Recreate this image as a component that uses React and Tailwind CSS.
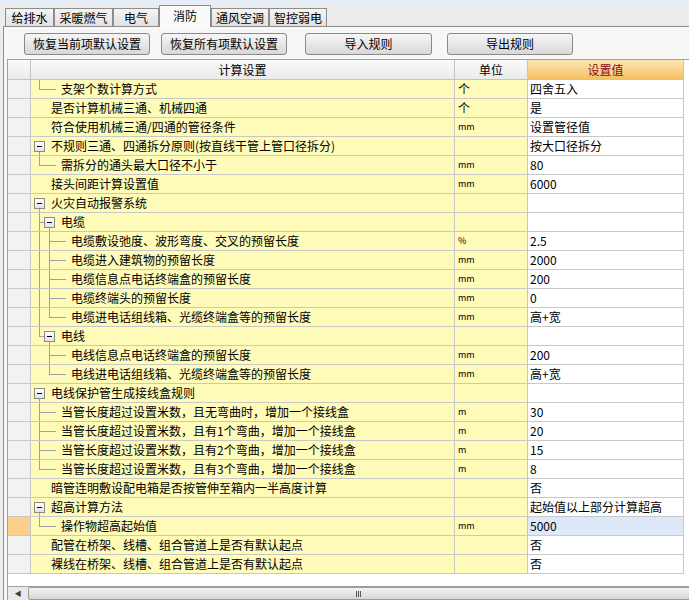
import React from 'react';

const tabs = ['给排水', '采暖燃气', '电气', '消防', '通风空调', '智控弱电'];

// ln: v = vertical line (x, 'full' | 'top' | 'bot'), h = horizontal stub (x1, x2)
const rows = [
  { t: '支架个数计算方式', lv: 1, u: '个', v: '四舍五入', ln: [['v', 8, 'top'], ['h', 8, 25]] },
  { t: '是否计算机械三通、机械四通', lv: 0, u: '个', v: '是' },
  { t: '符合使用机械三通/四通的管径条件', lv: 0, u: 'mm', v: '设置管径值' },
  { t: '不规则三通、四通拆分原则(按直线干管上管口径拆分)', lv: 0, box: 3, v: '按大口径拆分', ln: [['v', 8, 'bot']] },
  { t: '需拆分的通头最大口径不小于', lv: 1, u: 'mm', v: '80', ln: [['v', 8, 'top'], ['h', 8, 25]] },
  { t: '接头间距计算设置值', lv: 0, u: 'mm', v: '6000' },
  { t: '火灾自动报警系统', lv: 0, box: 3, v: '', ln: [['v', 8, 'bot']] },
  { t: '电缆', lv: 1, box: 13, v: '', ln: [['v', 8, 'full'], ['h', 8, 13], ['v', 18, 'bot']] },
  { t: '电缆敷设弛度、波形弯度、交叉的预留长度', lv: 2, u: '%', v: '2.5', ln: [['v', 8, 'full'], ['v', 18, 'full'], ['h', 18, 35]] },
  { t: '电缆进入建筑物的预留长度', lv: 2, u: 'mm', v: '2000', ln: [['v', 8, 'full'], ['v', 18, 'full'], ['h', 18, 35]] },
  { t: '电缆信息点电话终端盒的预留长度', lv: 2, u: 'mm', v: '200', ln: [['v', 8, 'full'], ['v', 18, 'full'], ['h', 18, 35]] },
  { t: '电缆终端头的预留长度', lv: 2, u: 'mm', v: '0', ln: [['v', 8, 'full'], ['v', 18, 'full'], ['h', 18, 35]] },
  { t: '电缆进电话组线箱、光缆终端盒等的预留长度', lv: 2, u: 'mm', v: '高+宽', ln: [['v', 8, 'full'], ['v', 18, 'top'], ['h', 18, 35]] },
  { t: '电线', lv: 1, box: 13, v: '', ln: [['v', 8, 'top'], ['h', 8, 13], ['v', 18, 'bot']] },
  { t: '电线信息点电话终端盒的预留长度', lv: 2, u: 'mm', v: '200', ln: [['v', 18, 'full'], ['h', 18, 35]] },
  { t: '电线进电话组线箱、光缆终端盒等的预留长度', lv: 2, u: 'mm', v: '高+宽', ln: [['v', 18, 'top'], ['h', 18, 35]] },
  { t: '电线保护管生成接线盒规则', lv: 0, box: 3, v: '', ln: [['v', 8, 'bot']] },
  { t: '当管长度超过设置米数，且无弯曲时，增加一个接线盒', lv: 1, u: 'm', v: '30', ln: [['v', 8, 'full'], ['h', 8, 25]] },
  { t: '当管长度超过设置米数，且有1个弯曲，增加一个接线盒', lv: 1, u: 'm', v: '20', ln: [['v', 8, 'full'], ['h', 8, 25]] },
  { t: '当管长度超过设置米数，且有2个弯曲，增加一个接线盒', lv: 1, u: 'm', v: '15', ln: [['v', 8, 'full'], ['h', 8, 25]] },
  { t: '当管长度超过设置米数，且有3个弯曲，增加一个接线盒', lv: 1, u: 'm', v: '8', ln: [['v', 8, 'top'], ['h', 8, 25]] },
  { t: '暗管连明敷设配电箱是否按管伸至箱内一半高度计算', lv: 0, v: '否' },
  { t: '超高计算方法', lv: 0, box: 3, v: '起始值以上部分计算超高', ln: [['v', 8, 'bot']] },
  { t: '操作物超高起始值', lv: 1, u: 'mm', v: '5000', sel: true, ln: [['v', 8, 'top'], ['h', 8, 25]] },
  { t: '配管在桥架、线槽、组合管道上是否有默认起点', lv: 0, v: '否' },
  { t: '裸线在桥架、线槽、组合管道上是否有默认起点', lv: 0, v: '否' },
];

const Lines = ({ ln }) =>
  (ln || []).map((l, i) => {
    if (l[0] === 'h') {
      return <span key={i} className="absolute top-[9px] h-px bg-[#a0a0a0]" style={{ left: l[1], width: l[2] - l[1] }} />;
    }
    const cls =
      l[2] === 'full' ? 'top-0 h-[18px]' : l[2] === 'top' ? 'top-0 h-[10px]' : 'top-[9px] h-[9px]';
    return <span key={i} className={`absolute w-px bg-[#a0a0a0] ${cls}`} style={{ left: l[1] }} />;
  });

const ExpandBox = ({ x }) => (
  <span
    className="absolute top-[4px] w-[11px] h-[11px] border border-[#8a8a8a] bg-gradient-to-b from-white to-[#e4e4e4] flex items-center justify-center"
    style={{ left: x - 2 }}
  >
    <span className="w-[5px] h-px bg-black" />
  </span>
);

const Button = ({ label, className }) => (
  <div
    className={`h-[22px] w-[126px] rounded-[3px] border border-[#8a8a8a] bg-gradient-to-b from-[#f6f6f6] to-[#d8d8d8] flex items-center justify-center text-[12px] text-black ${className}`}
  >
    {label}
  </div>
);

const App = () => {
  const textLeft = [20, 30, 40];

  return (
    <div className="w-[689px] h-[600px] overflow-hidden bg-[#ececec] flex flex-col text-black" style={{ fontFamily: '"Noto Sans CJK SC", "Noto Sans", sans-serif' }}>
      {/* Tabs */}
      <div className="h-[26px] shrink-0 flex items-end pl-[5px] border-t-[3px] border-[#e3ecf7]">
        {tabs.map((tab, i) =>
          tab === '消防' ? (
            <div key={tab} className="relative z-10 -mb-px h-[22px] w-[52px] border border-b-0 border-[#8d8d8d] bg-[#fafafa] flex items-start justify-center pt-[1px] text-[12px]">
              {tab}
            </div>
          ) : (
            <div key={tab} className={`h-[18px] border border-b-0 border-[#8d8d8d] bg-gradient-to-b from-[#f4f4f4] to-[#e2e2e2] flex items-center justify-center text-[12px] ${i === 0 ? 'w-[49px]' : i === 1 ? 'w-[59px]' : i === 2 ? 'w-[46px]' : i === 4 ? 'w-[58px]' : 'w-[58px]'}`}>
              {tab}
            </div>
          )
        )}
      </div>

      {/* Panel */}
      <div className="flex-1 ml-[3px] border-t border-l border-[#8d8d8d] bg-[#f7f7f7] flex flex-col pl-[3px]">
        <div className="flex mt-[6px] h-[22px] shrink-0">
          <Button label="恢复当前项默认设置" className="ml-[17px]" />
          <Button label="恢复所有项默认设置" className="ml-[11px]" />
          <Button label="导入规则" className="ml-[18px] w-[127px]" />
          <Button label="导出规则" className="ml-[15px]" />
        </div>

        {/* Grid */}
        <div className="mt-[4px] flex-1 border-t border-l border-[#a0a0a0] bg-white flex flex-col">
          {/* Header */}
          <div className="flex h-[20px] shrink-0 text-[12px]">
            <div className="w-[23px] border-r border-b border-[#c4c4c4] bg-gradient-to-b from-[#fafafa] to-[#ebebeb]" />
            <div className="w-[424px] border-r border-b border-[#c4c4c4] bg-gradient-to-b from-[#fafafa] to-[#ebebeb] flex items-center justify-center">计算设置</div>
            <div className="w-[73px] border-r border-b border-[#c4c4c4] bg-gradient-to-b from-[#fafafa] to-[#ebebeb] flex items-center justify-center">单位</div>
            <div className="w-[156px] border-r border-b border-[#c4c4c4] bg-gradient-to-b from-[#fde7b4] to-[#f5c160] flex items-center justify-center text-[#8b0a1e]">设置值</div>
          </div>

          {/* Rows */}
          {rows.map((r, i) => (
            <div key={i} className="flex h-[19px] shrink-0 text-[12px] leading-[18px]">
              <div className={`w-[23px] border-r border-b border-[#c8c8c8] ${r.sel ? 'bg-[#fbd08a]' : 'bg-[#f2f2f2]'}`} />
              <div className="relative w-[424px] border-r border-b border-[#c8c8c8] bg-[#fffbb8] whitespace-nowrap overflow-hidden">
                <Lines ln={r.ln} />
                {r.box !== undefined && <ExpandBox x={r.box + 2} />}
                <span className="absolute top-0" style={{ left: textLeft[r.lv] }}>{r.t}</span>
              </div>
              <div className={`w-[73px] border-r border-b border-[#c8c8c8] bg-[#fffbb8] pl-[3px] ${r.u === '个' ? 'text-[12px]' : 'text-[9px]'}`}>
                {r.u}
              </div>
              <div className={`w-[156px] border-r border-b border-[#c8c8c8] pl-[2px] whitespace-nowrap ${r.sel ? 'bg-[#dde9f8]' : 'bg-white'}`}>
                {r.v}
              </div>
            </div>
          ))}

          <div className="flex-1" />

          {/* Horizontal scrollbar */}
          <div className="h-[14px] shrink-0 border-t border-[#a0a0a0] flex bg-[#eaeaea]">
            <div className="w-[20px] flex items-center justify-center text-[7px] text-[#404040]">◀</div>
            <div className="flex-1 -mr-[80px] rounded-[2px] border border-[#9a9a9a] bg-gradient-to-b from-[#f4f4f4] to-[#d6d6d6] flex items-center justify-center">
              <div className="flex gap-[1px] -ml-[80px]">
                <span className="w-px h-[6px] bg-[#555]" />
                <span className="w-px h-[6px] bg-[#555]" />
                <span className="w-px h-[6px] bg-[#555]" />
              </div>
            </div>
          </div>
        </div>
      </div>
    </div>
  );
};

export default App;
